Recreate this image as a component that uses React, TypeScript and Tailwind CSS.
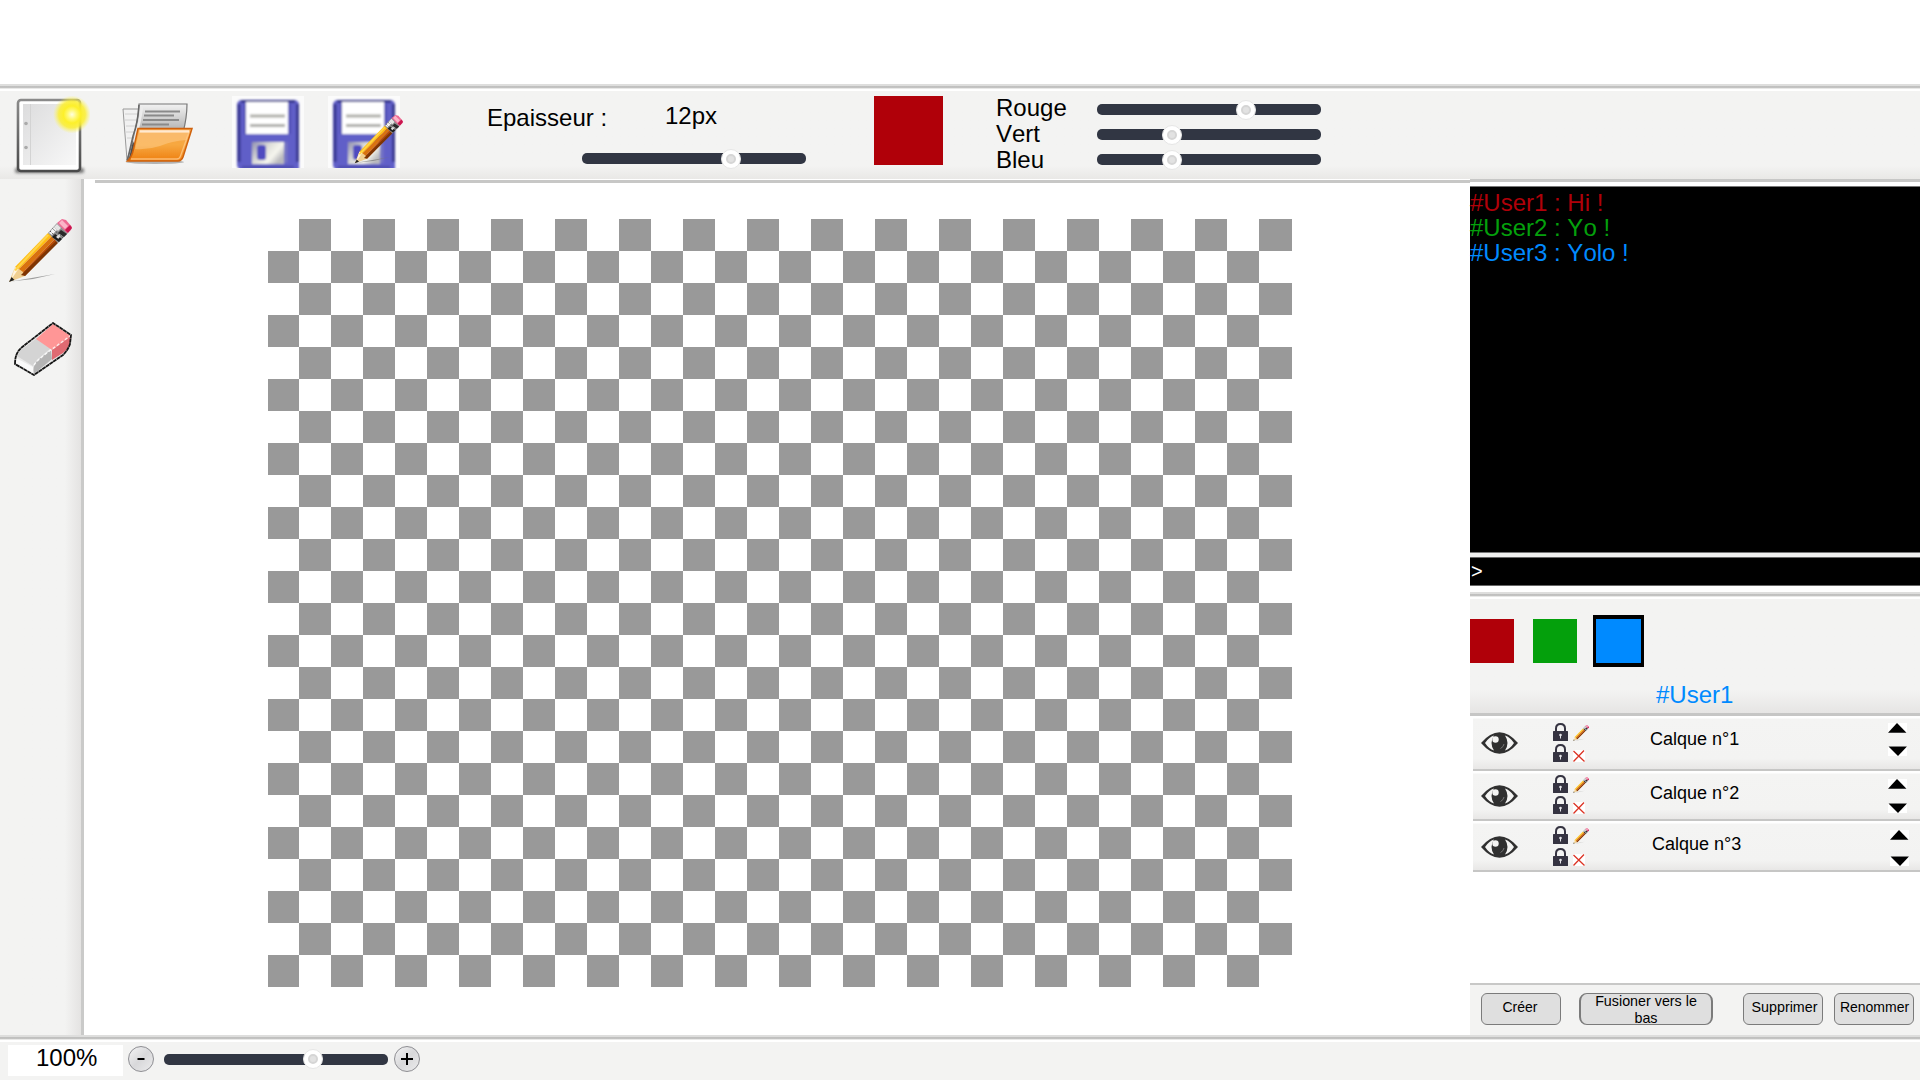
import React from "react";

function Pencil({ className }: { className: string }) {
  return (
    <svg className={className} viewBox="0 0 64 64" fill="none">
      <path d="M3 62.5 47 55 L25 60Z" fill="#777" opacity=".7" />
      <path d="M7 48 L17 50 L17 57 L1 63Z" fill="#f0cf90" />
      <path d="M7 48 L11 49 L3 61Z" fill="#fff3dc" />
      <path d="M1 63 3.6 58 6.5 61Z" fill="#222" />
      <path d="M7 48 40 14 44 17 11 50Z" fill="#ffbe12" />
      <path d="M11 50 44 17 47 20 15 53Z" fill="#d9720f" />
      <path d="M15 53 47 20 50 23 17 57Z" fill="#b84a05" />
      <path d="M13 56 17 57 50 24 48 22Z" fill="#7e3504" />
      <path d="M6 51 L39 15.5 L41 16.5 L8 52Z" fill="#ffd44a" />
      <path d="M40 14 49 4 60 14 50 24Z" fill="#8d8d8d" />
      <path d="M44 18 47 15 54 20 51 23Z" fill="#1c1c1c" />
      <path d="M41 14 46 8 49 11 44 16Z" fill="#f4f4f4" />
      <path d="M48 18 53 13 55 15 50 20Z" fill="#ddd" />
      <path d="M50 14 53 11 59 15 56 18Z" fill="#2a2a2a" />
      <path d="M46 8 49 5 53 9 50 12Z" fill="#e4e4e4" />
      <path d="M42 12 52 22M44.500 9.500 55 19" stroke="#333" strokeWidth=".8" strokeDasharray="1.500 1" />
      <path d="M49 4 54 0 58 1 64 8 63 11 59 14Z" fill="#ee6a93" />
      <path d="M51 4 54 1 60 7 57 10Z" fill="#fbb4c8" />
      <path d="M57 11 62 6 64 9 60 14Z" fill="#c9174f" />
    </svg>
  );
}

function Eraser() {
  return (
    <svg className="h-[54px] w-[58px]" viewBox="0 0 58 54">
      <path d="M1 42 C1 33 4 29 7 26 L39 1 L57 13 L56 22 Q54 28 49 33 L20 53 Z" fill="#e9e9e9" />
      <path d="M7 28 23 16 37 26 24 37 Q20 41 19 44 L3 34Z" fill="#d4d4d4" />
      <path d="M2 36 19 45 19 52 2 42Z" fill="#fafafa" />
      <path d="M24 38 37 28 38 37 20 52 Q18 44 24 38Z" fill="#b4b4b4" />
      <path d="M22 17 39 2 57 14 38 28Z" fill="#ff9696" />
      <path d="M38 28 57 14 Q57 25 49 31 L38 38Z" fill="#e06a72" />
      <path d="M20 43 Q23 38 37 28 L56 14" fill="none" stroke="#fff" strokeWidth="1.4" strokeDasharray="3 2" opacity=".8" />
      <path d="M1 42 C1 33 4 29 7 26 L39 1 L57 13 L56 22 Q54 28 49 33 L20 53 Z" fill="none" stroke="#151515" strokeWidth="1.800" strokeDasharray="4 .4" />
    </svg>
  );
}

function NewPage() {
  return (
    <svg className="h-[84px] w-[80px]" viewBox="0 0 80 84">
      <defs>
        <linearGradient id="pg" x1="0" y1="0" x2="1" y2="1">
          <stop offset="0" stopColor="#dcdcdd" />
          <stop offset="1" stopColor="#f8f8f8" />
        </linearGradient>
        <linearGradient id="pe" x1="0" y1="0" x2="0" y2="1">
          <stop offset="0" stopColor="#8a8a8a" />
          <stop offset="1" stopColor="#4a4a4a" />
        </linearGradient>
        <radialGradient id="sun">
          <stop offset="0" stopColor="#ffffe0" />
          <stop offset=".25" stopColor="#fff870" />
          <stop offset=".45" stopColor="#fdf02a" />
          <stop offset=".7" stopColor="#fbee30" stopOpacity=".85" />
          <stop offset="1" stopColor="#fdf560" stopOpacity="0" />
        </radialGradient>
        <filter id="pb" x="-20%" y="-200%" width="140%" height="500%">
          <feGaussianBlur stdDeviation="1.500" />
        </filter>
      </defs>
      <rect x="5" y="74" width="69" height="5" rx="2" fill="#555" opacity=".8" filter="url(#pb)" />
      <rect x="8" y="6" width="62" height="71" rx="3" fill="#fff" stroke="url(#pe)" strokeWidth="2.600" />
      <rect x="13" y="10" width="53" height="61" fill="url(#pg)" />
      <path d="M20.500 10V71" stroke="#d3d3d3" />
      <circle cx="16" cy="29.500" r="1.800" fill="#aaa" />
      <circle cx="16" cy="53.500" r="1.800" fill="#aaa" />
      <circle cx="62" cy="20.500" r="19" fill="url(#sun)" />
    </svg>
  );
}

function OpenFolder() {
  return (
    <svg className="h-[64px] w-[72px]" viewBox="0 0 72 64">
      <defs>
        <linearGradient id="fo" x1="0" y1="0" x2="0" y2="1">
          <stop offset="0" stopColor="#f5a248" />
          <stop offset=".5" stopColor="#f7a840" />
          <stop offset="1" stopColor="#ee7f12" />
        </linearGradient>
        <linearGradient id="fp" x1="0" y1="0" x2="0" y2="1">
          <stop offset="0" stopColor="#f2f2f2" />
          <stop offset=".55" stopColor="#a9a9a9" />
        </linearGradient>
        <filter id="ff">
          <feGaussianBlur stdDeviation="0.4" />
        </filter>
      </defs>
      <g filter="url(#ff)">
        <ellipse cx="33" cy="59" rx="29" ry="2" fill="#888" opacity=".6" />
        <path d="M1 6H17V20L12 57 5 57Z" fill="#f1f1f1" stroke="#999" />
        <path d="M3 11H15M3 17H14M4 23H13M4 29H12M5 35H11" stroke="#d0d0d0" />
        <path d="M17 1H65Q65 14 61 30L10 56 5 57Q11 40 13 28 16 17 17 1Z" fill="url(#fp)" stroke="#777" strokeWidth="1.200" />
        <path d="M17 2Q16 19 11 33L5.500 57" fill="none" stroke="#666" strokeWidth="1.500" />
        <path d="M20 3Q18 20 14 31L8.500 54" fill="none" stroke="#ececec" strokeWidth="2.500" />
        <path d="M11 38 6.500 57 9 57 13 43Z" fill="#4d4d4d" />
        <path d="M23 8.500H58M22 12.500H52M21 17H57M20 21.500H47" stroke="#8a8a8a" strokeWidth="1.800" />
        <path d="M16 25.500H70L61 54Q59.500 58 56 58H5.500Q10 54 11.500 46Z" fill="url(#fo)" stroke="#cf610a" strokeWidth="1.500" />
        <path d="M17.500 28H67.500L58.500 53Q57.500 56 55 56H9" fill="none" stroke="#ffc98a" strokeWidth="1.300" opacity=".8" />
        <path d="M17.500 28.500H67" stroke="#ffe9d0" strokeWidth="2.500" />
        <path d="M17 29H67L64 37Q50 38 38 43 26 47 13 46Z" fill="#ffd59a" opacity=".45" />
      </g>
    </svg>
  );
}

function Floppy() {
  return (
    <svg className="h-[72px] w-[72px]" viewBox="0 0 72 72">
      <defs>
        <filter id="fb">
          <feGaussianBlur stdDeviation="1.300" />
        </filter>
        <linearGradient id="fs" x1="0" y1="0" x2="1" y2=".6">
          <stop offset="0" stopColor="#8f8fb0" />
          <stop offset=".45" stopColor="#dcdcd8" />
          <stop offset=".75" stopColor="#f6f6ee" />
          <stop offset="1" stopColor="#b9b9bd" />
        </linearGradient>
      </defs>
      <rect width="72" height="72" fill="#fbfbfb" />
      <g filter="url(#fb)">
        <path d="M9 4H63Q67 5 67 9V76H9L5 70V9Q5 5 9 4Z" fill="#605ec8" />
        <path d="M7 8V66M65.500 8V66M9 5.500H63" stroke="#38378f" strokeWidth="3" fill="none" />
        <rect x="14" y="6" width="42" height="32" fill="#fff" />
        <path d="M18 20H53M18 29.500H53" stroke="#adada8" strokeWidth="3" />
        <path d="M13 8V38M58 8V38" stroke="#4a48ac" strokeWidth="1.500" />
        <rect x="20" y="46" width="32" height="22" fill="url(#fs)" />
        <path d="M54 46V67" stroke="#7674c4" strokeWidth="3" />
        <rect x="25" y="49" width="9" height="15" rx="3" fill="#4f4cc0" />
        <path d="M10 71H62" stroke="#4a49a8" strokeWidth="2" />
      </g>
    </svg>
  );
}

function Slider({ knob }: { knob: number }) {
  return (
    <div className="flex h-[11px] w-[224px] shrink-0 items-center rounded-[5px] bg-[#313643]">
      <div
        className="flex size-[20px] shrink-0 items-center justify-center rounded-full border border-[#e6e6e6] bg-white"
        style={{ marginLeft: knob - 10 }}
      >
        <div className="size-[10px] rounded-full border-2 border-[#d5d5d5] bg-[#e2e2e2]" />
      </div>
    </div>
  );
}

function RidgeLine() {
  return (
    <div className="h-[7px] shrink-0 bg-[linear-gradient(to_bottom,#dededd_0,#dededd_2px,#bfbfbe_2px,#c4c4c3_4px,#e8e8e7_4px,#e8e8e7_5px,#fff_5px)]" />
  );
}

function Toolbar() {
  return (
    <header className="flex h-[95px] shrink-0 flex-col bg-[#f3f3f2]">
      <RidgeLine />
      <div className="flex min-h-0 flex-1 items-start bg-linear-to-b from-[#f3f3f2] from-85% to-[#e9e8e6]">
        <div className="ml-[10px] mt-[3px] h-[84px]">
          <NewPage />
        </div>
        <div className="ml-[32px] mt-[12px]">
          <OpenFolder />
        </div>
        <div className="ml-[38px] mt-[5px]">
          <Floppy />
        </div>
        <div className="relative ml-[24px] mt-[5px]">
          <Floppy />
          <Pencil className="absolute left-[26px] top-[19px] size-[49px]" />
        </div>
        <div className="ml-[87px] flex w-[319px] flex-col">
          <div className="flex text-2xl leading-6">
            <span className="mt-[15px] w-[178px]">Epaisseur :</span>
            <span className="mt-[13px]">12px</span>
          </div>
          <div className="ml-[95px] mt-[23px]">
            <Slider knob={148.5} />
          </div>
        </div>
        <div className="ml-[68px] mt-[5px] size-[69px] bg-[#b00009]" />
        <div className="ml-[53px] mt-[4px] w-[101px] text-2xl leading-[26px]">
          <p>Rouge</p>
          <p>Vert</p>
          <p>Bleu</p>
        </div>
        <div className="mt-[13px] flex flex-col gap-[14px]">
          <Slider knob={148.5} />
          <Slider knob={75} />
          <Slider knob={75} />
        </div>
      </div>
    </header>
  );
}

const COLUMNS = 32;
const ROWS = 24;

function Canvas() {
  return (
    <div className="ml-[184px] mt-[37px] grid h-[768px] w-[1024px] grid-cols-[31px_repeat(30,32px)_33px] grid-rows-[repeat(24,32px)]">
      {Array.from({ length: COLUMNS * ROWS }, (_, i) => (
        <div key={i} className={(Math.floor(i / COLUMNS) + (i % COLUMNS)) % 2 ? "bg-[#999999]" : "bg-white"} />
      ))}
    </div>
  );
}

function Eye() {
  return (
    <svg className="h-[22px] w-[38px]" viewBox="0 0 38 22">
      <path d="M0 11Q18.500-10.500 37 11Q18.500 32.500 0 11Z" fill="#303030" />
      <path d="M4 11Q8 5 13 3.500Q8 11 13 18.500Q8 17 4 11ZM33 11Q29 5 24 3.500Q29 11 24 18.500Q29 17 33 11Z" fill="#f4f4f3" />
      <circle cx="14.500" cy="7.500" r="3.200" fill="#f4f4f3" />
      <path d="M23 12Q22.500 15 19.500 16.500" stroke="#777" fill="none" />
    </svg>
  );
}

function Lock() {
  return (
    <svg className="h-[18px] w-[15px]" viewBox="0 0 15 18">
      <path d="M3 9V5.500Q3 1 7.500 1Q12 1 12 5.500V9" fill="none" stroke="#353341" strokeWidth="2" />
      <rect y="8" width="15" height="10" rx=".5" fill="#353341" />
      <circle cx="7.500" cy="12" r="1.300" fill="#e6e6ea" />
      <path d="M7.500 12V15.500" stroke="#e6e6ea" />
    </svg>
  );
}

function Arrow({ down = false }: { down?: boolean }) {
  return (
    <svg className="h-[10px] w-[19px] bg-white" viewBox="0 0 19 10">
      <path d={down ? "M.5 .5H19L10 10Z" : "M9 0 18.500 9.800H0Z"} fill="#000" />
    </svg>
  );
}

const layers = [
  { name: "Calque n°1", row: "h-[55px]", eye: "mt-[16px]", locks: "mt-[7px] gap-y-[3px]", text: "mt-[13px] ml-[61px]", arrows: "mt-[7px] ml-[145px] gap-[13px]" },
  { name: "Calque n°2", row: "h-[50px]", eye: "mt-[14px]", locks: "mt-[4px] gap-y-[3px]", text: "mt-[12px] ml-[61px]", arrows: "mt-[8px] ml-[145px] gap-[14px]" },
  { name: "Calque n°3", row: "h-[51px]", eye: "mt-[15px]", locks: "mt-[5px] gap-y-[4px]", text: "mt-[13px] ml-[63px]", arrows: "mt-[9px] ml-[145px] gap-[16px]" },
];

function Layers() {
  return (
    <div className="ml-[3px]">
      {layers.map((l) => (
        <div
          key={l.name}
          className={`${l.row} flex items-start border-b-2 border-[#c6c6c5] bg-[linear-gradient(to_bottom,#fff_0,#fff_2px,#f4f4f3_3px,#f3f3f2_80%,#e8e7e6_100%)]`}
        >
          <div className={`${l.eye} ml-[8px]`}>
            <Eye />
          </div>
          <div className={`${l.locks} ml-[34px] grid grid-cols-[15px_16px] gap-x-[5px]`}>
            <Lock />
            <Pencil className="mt-[2px] size-4" />
            <Lock />
            <svg className="mt-[6px] h-[12px] w-[12px] bg-white" viewBox="0 0 12 12">
              <path d="M.5 1 11.500 11.500M11 .5.5 11.500" stroke="#dc3324" strokeWidth="1.300" />
            </svg>
          </div>
          <span className={`${l.text} w-[93px] whitespace-nowrap text-lg leading-5`}>{l.name}</span>
          <div className={`${l.arrows} flex flex-col`}>
            <Arrow />
            <Arrow down />
          </div>
        </div>
      ))}
    </div>
  );
}

function ActionButton({ className, children }: { className: string; children: React.ReactNode }) {
  return (
    <button
      className={`${className} flex h-8 shrink-0 justify-center border border-[#7b7b7b] bg-[#dfdfdf] text-center leading-[17px]`}
    >
      {children}
    </button>
  );
}

function SidePanel() {
  return (
    <aside className="flex w-[450px] shrink-0 flex-col">
      <div className="mt-[4px] h-[367px] border-y border-[#777] bg-black text-2xl leading-[25px]">
        <div className="pt-[3px]">
          <p className="text-[#b00009]">#User1 : Hi !</p>
          <p className="text-[#04a00c]">#User2 : Yo !</p>
          <p className="text-[#008aff]">#User3 : Yolo !</p>
        </div>
      </div>
      <div className="h-[4px] bg-[#f0f0ef]" />
      <div className="h-[29px] border-y border-[#666] bg-black pl-px text-xl leading-[27px] text-white">&gt;</div>
      <div className="h-[6px] bg-white" />
      <RidgeLine />
      <div className="flex h-[117px] flex-col border-b-[3px] border-[#c6c6c5] bg-linear-to-b from-[#f3f3f2] from-80% to-[#e6e5e4]">
        <div className="mt-[16px] flex h-[52px] items-center">
          <div className="size-[44px] bg-[#b00009]" />
          <div className="ml-[19px] size-[44px] bg-[#04a00c]" />
          <div className="ml-[16px] h-[52px] w-[51px] border-x-[3px] border-y-4 border-black bg-[#008aff]" />
        </div>
        <p className="ml-[186px] mt-[16px] text-2xl leading-6 text-[#008aff]">#User1</p>
      </div>
      <Layers />
      <div className="flex-1" />
      <div className="flex h-[52px] items-start border-t-2 border-[#c8c8c7] bg-[#f3f3f2]">
        <ActionButton className="ml-[11px] mt-[8px] w-[80px] rounded-[6px] pr-[2px] pt-[5px] text-sm">Créer</ActionButton>
        <ActionButton className="ml-[18px] mt-[8px] w-[134px] rounded-[8px] border-x-2 text-[14.3px]">
          <span className="-mt-px w-[112px]">Fusioner vers le bas</span>
        </ActionButton>
        <ActionButton className="ml-[30px] mt-[8px] w-[80px] rounded-[6px] pl-[3px] pt-[5px] text-[14.3px]">Supprimer</ActionButton>
        <ActionButton className="ml-[11px] mt-[8px] w-[80px] rounded-[6px] pl-px pt-[5px] text-sm">Renommer</ActionButton>
      </div>
    </aside>
  );
}

function RoundButton({ label, plus = false }: { label: string; plus?: boolean }) {
  return (
    <button
      aria-label={label}
      className="flex size-[26px] shrink-0 items-center justify-center rounded-full border border-[#8e8e93] bg-linear-to-br from-[#f4f4f5] via-[#d8d8da] to-[#ececed]"
    >
      <svg className="size-[12px]" viewBox="0 0 12 12">
        <path d={plus ? "M0 6H12M6 0V12" : "M2.500 6H9.500"} stroke="#000" strokeWidth="2" />
      </svg>
    </button>
  );
}

function StatusBar() {
  return (
    <footer className="flex h-[45px] shrink-0 flex-col bg-[#f3f3f2]">
      <RidgeLine />
      <div className="flex items-start">
        <div className="ml-[8px] mt-[3px] h-[31px] w-[115px] bg-white pl-[28px] text-2xl leading-[26px]">100%</div>
        <div className="ml-[5px] mt-[4px] flex items-center">
          <RoundButton label="Zoom -" />
          <div className="ml-[10px] mr-[6px]">
            <Slider knob={148.5} />
          </div>
          <RoundButton label="Zoom +" plus />
        </div>
      </div>
    </footer>
  );
}

export default function App() {
  return (
    <div className="flex h-[1080px] w-[1920px] flex-col overflow-hidden bg-white pt-[84px] font-['Liberation_Sans',Arial,sans-serif] text-black [font-kerning:none]">
      <Toolbar />
      <div className="flex min-h-0 flex-1">
        <nav className="flex w-[84px] shrink-0 flex-col border-r-[3px] border-[#cacac9] bg-linear-to-r from-[#f3f3f2] from-80% to-[#e4e3e2]">
          <Pencil className="ml-[8px] mt-[40px] size-16" />
          <div className="ml-[14px] mt-[39px]">
            <Eraser />
          </div>
        </nav>
        <main className="flex min-w-0 flex-1 flex-col">
          <div className="ml-[11px] mt-px h-[3px] bg-[#c7c7c6]" />
          <div className="-mt-px">
            <Canvas />
          </div>
        </main>
        <div className="flex w-[450px] shrink-0 flex-col">
          <div className="h-[3px] shrink-0 bg-[#c7c7c6]" />
          <div className="flex min-h-0 flex-1">
            <SidePanel />
          </div>
        </div>
      </div>
      <StatusBar />
    </div>
  );
}
